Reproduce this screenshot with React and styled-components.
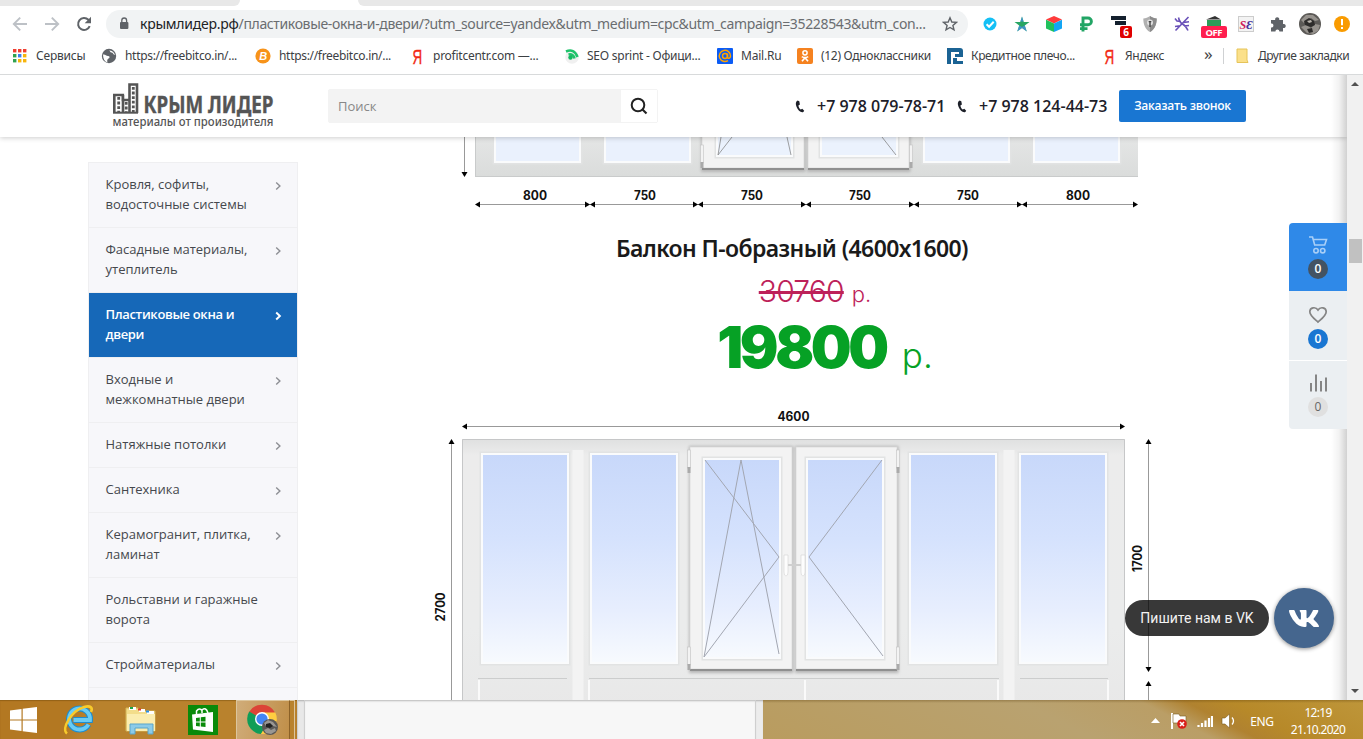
import React from "react";
import styled, { createGlobalStyle, css } from "styled-components";

const UI = `"Noto Sans", "Open Sans", "Liberation Sans", sans-serif`;
const BODY = `"Open Sans", "Noto Sans", sans-serif`;
const DIGITS = `Inter, "Liberation Sans", sans-serif`;

const GlobalStyle = createGlobalStyle`
  * { box-sizing: border-box; }
  body { margin: 0; background: #fff; overflow: hidden; }
`;

const Screen = styled.div`
  width: 1363px;
  height: 739px;
  display: flex;
  flex-direction: column;
  overflow: hidden;
  background: #fff;
  font-family: ${UI};
`;

/* ---------- browser chrome ---------- */

const TabStrip = styled.div`
  flex: 0 0 6px;
  display: flex;
  justify-content: space-between;
  background: #fff;
`;
const TabGap = styled.div`
  width: ${(p) => p.$w}px;
  background: #e8e8e8;
  border-radius: ${(p) => (p.$left ? "0 0 0 7px" : "0 0 7px 0")};
`;

const Toolbar = styled.div`
  flex: 0 0 36px;
  display: flex;
  align-items: center;
  padding-left: 4px;
`;
const NavButton = styled.div`
  width: 32px;
  height: 32px;
  display: grid;
  place-items: center;
`;
const Omnibox = styled.div`
  width: 862px;
  height: 28px;
  margin: 0 6px;
  padding: 0 10px 0 13px;
  border-radius: 14px;
  background: #f1f3f4;
  display: flex;
  align-items: center;
  svg { flex: none; }
`;
const Url = styled.div`
  margin-left: 11px;
  flex: 1;
  font-size: 14px;
  line-height: 20px;
  letter-spacing: -0.355px;
  color: #6a6d70;
  white-space: nowrap;
  b { font-weight: 400; color: #202124; letter-spacing: -0.25px; }
`;
const Extension = styled(NavButton)``;

const BookmarkBar = styled.div`
  flex: 0 0 33px;
  display: flex;
  align-items: center;
  padding: 0 0 5px 12px;
  border-bottom: 1px solid #d8dadb;
`;
const Bookmark = styled.div`
  width: ${(p) => p.$w}px;
  display: flex;
  align-items: center;
  gap: 8px;
  font-size: 12px;
  line-height: 16px;
  color: #3c4043;
  white-space: nowrap;
  letter-spacing: ${(p) => p.$ls || 0}px;
  svg { flex: 0 0 16px; overflow: visible; }
`;
const More = styled.div`
  width: 19px;
  color: #444;
  font-size: 17px;
  line-height: 14px;
  padding-bottom: 3px;
`;
const Divider = styled.div`
  width: 1px;
  height: 16px;
  background: #cfd1d3;
  margin-right: 10px;
`;

/* ---------- page ---------- */

const Browser = styled.div`
  flex: 0 0 625px;
  display: flex;
`;
const Page = styled.div`
  position: relative;
  width: 1347px;
  height: 625px;
  overflow: hidden;
  background: #fff;
`;
const EdgeShade = styled.div`
  position: absolute;
  z-index: 3;
  right: 0;
  top: 0;
  bottom: 0;
  width: 16px;
  background: linear-gradient(to right, rgba(0, 0, 0, 0), rgba(0, 0, 0, 0.05) 50%, rgba(0, 0, 0, 0.18));
`;
const SiteHeader = styled.header`
  position: relative;
  z-index: 2;
  height: 62px;
  padding-left: 112px;
  display: flex;
  align-items: center;
  background: #fff;
  box-shadow: 0 1px 5px rgba(0, 0, 0, 0.2);
  font-family: ${BODY};
`;
const Search = styled.div`
  width: 330px;
  height: 34px;
  margin-left: 54px;
  display: flex;
  border: 1px solid #f3f3f3;
  border-radius: 2px;
  background: #f3f3f3;
`;
const SearchInput = styled.div`
  flex: 1;
  padding-left: 9px;
  font-size: 13px;
  line-height: 32px;
  color: #888;
`;
const SearchButton = styled.div`
  width: 36px;
  background: #fff;
  display: grid;
  place-items: center;
`;
const Phones = styled.div`
  display: flex;
  margin-left: 137px;
`;
const Phone = styled.div`
  width: 162px;
  display: flex;
  align-items: center;
  font-size: 16px;
  font-weight: 600;
  color: #1d2029;
  white-space: nowrap;
  svg { margin-right: 12px; flex: none; }
`;
const CallButton = styled.div`
  width: 127px;
  height: 32px;
  border-radius: 2px;
  background: #1976d2;
  color: #fff;
  font-size: 12px;
  font-weight: 600;
  line-height: 32px;
  letter-spacing: -0.25px;
  text-align: center;
  white-space: nowrap;
`;

const Columns = styled.div`
  display: flex;
  padding-left: 88px;
`;
const Sidebar = styled.nav`
  width: 210px;
  height: 560px;
  margin-top: 25px;
  border: 1px solid #efeff1;
  background: #f7f7fa;
  font-family: ${BODY};
`;
const MenuItem = styled.div`
  display: flex;
  justify-content: space-between;
  padding: 11px 15px 13px 16.5px;
  border-bottom: 1px solid #efeff1;
  font-size: 13px;
  line-height: 20px;
  letter-spacing: ${(p) => (p.$active ? -0.35 : 0)}px;
  color: #45484d;
  white-space: pre-line;
  svg { margin-top: 7px; stroke: #8d8f94; }
  ${(p) => p.$active && css`
    background: #1668b8;
    color: #fff;
    font-weight: 600;
    svg { stroke: #fff; }
  `}
`;

const Products = styled.main`
  width: 930px;
  margin-left: 29px;
  display: flex;
  flex-direction: column;
  align-items: center;
`;
const Diagram = styled.svg`
  flex: none;
  display: block;
  text { font-family: ${DIGITS}; font-weight: 700; font-size: 12.5px; fill: #111; }
`;
const ProductTitle = styled.h3`
  margin: 17px 0 0;
  height: 32px;
  font-family: ${UI};
  font-size: 23px;
  line-height: 32px;
  font-weight: 600;
  letter-spacing: -0.6px;
  color: #1a1a1a;
  white-space: nowrap;
`;
const OldPrice = styled.div`
  height: 48px;
  margin: 3px 0 0 46px;
  display: flex;
  align-items: baseline;
  gap: 8px;
  font-family: ${DIGITS};
  font-size: 30px;
  line-height: 48px;
  font-weight: 300;
  color: #bd2159;
  letter-spacing: -0.8px;
  s { text-decoration-thickness: 3px; }
  small { font-size: 22px; letter-spacing: 0; }
`;
const NewPrice = styled.div`
  height: 72px;
  margin: -4px 0 0 66px;
  display: flex;
  align-items: baseline;
  gap: 16px;
  font-family: ${DIGITS};
  font-size: 57.5px;
  line-height: 72px;
  font-weight: 900;
  letter-spacing: -3.4px;
  color: #06a125;
  small { font-size: 35px; font-weight: 300; letter-spacing: 0; }
`;
const Spacer = styled.div`
  height: ${(p) => p.$h}px;
`;

const QuickPanel = styled.div`
  position: absolute;
  z-index: 3;
  right: 0;
  top: 148px;
  width: 58px;
  border-radius: 4px 0 0 4px;
  overflow: hidden;
  background: #fff;
  display: flex;
  flex-direction: column;
`;
const QuickItem = styled.div`
  height: ${(p) => p.$h}px;
  margin-bottom: ${(p) => p.$gap || 0}px;
  padding-top: ${(p) => p.$pad}px;
  display: flex;
  flex-direction: column;
  align-items: center;
  background: ${(p) => p.$bg};
`;
const Count = styled.div`
  width: 20px;
  height: 20px;
  margin-top: 4px;
  border-radius: 50%;
  background: ${(p) => p.$bg};
  color: ${(p) => p.$fg || "#fff"};
  font: ${(p) => (p.$fg ? 400 : 600)} 12px/20px ${BODY};
  text-align: center;
`;

const VkWidget = styled.div`
  position: absolute;
  z-index: 3;
  right: 13px;
  bottom: 52px;
  display: flex;
  align-items: center;
  gap: 5px;
`;
const VkTip = styled.div`
  width: 144px;
  height: 36px;
  border-radius: 18px;
  background: rgba(0, 0, 0, 0.78);
  color: #f2f2f2;
  font: 400 14px/36px Roboto, sans-serif;
  text-align: center;
  white-space: nowrap;
`;
const VkButton = styled.div`
  width: 60px;
  height: 60px;
  border-radius: 50%;
  background: #45668e;
  box-shadow: 0 1px 4px rgba(0, 0, 0, 0.45);
  display: grid;
  place-items: center;
`;

const Scrollbar = styled.div`
  width: 16px;
  height: 625px;
  background: #f1f1f1;
  display: flex;
  flex-direction: column;
  align-items: center;
`;
const ScrollArrow = styled.div`
  margin-top: ${(p) => (p.$down ? "auto" : "7px")};
  margin-bottom: ${(p) => (p.$down ? "7px" : 0)};
  border: 4px solid transparent;
  ${(p) => (p.$down ? "border-top-color: #505050; border-bottom: 0;" : "border-bottom-color: #505050; border-top: 0;")}
`;
const Thumb = styled.div`
  width: 13px;
  height: 24px;
  margin-top: 153px;
  background: #c1c1c1;
`;

/* ---------- taskbar ---------- */

const Taskbar = styled.div`
  position: relative;
  flex: 0 0 39px;
  display: flex;
  background: #b88026;
`;
const Launchers = styled.div`
  width: 297px;
  display: flex;
  background: linear-gradient(115deg, #b37822 0 70px, #b9822d 90px 100%);
  box-shadow: inset 0 1px 1px rgba(90, 55, 0, 0.35);
`;
const Launcher = styled.div`
  width: ${(p) => p.$w}px;
  display: grid;
  place-items: center;
  ${(p) => p.$active && css`
    height: 39px;
    background: linear-gradient(100deg, #d0ac79, #c08f49);
    border: 1px solid #dcc59d;
    border-right-color: #8b6127;
    border-bottom: 0;
  `}
`;
const Stack = styled.div`
  width: 5px;
  height: 39px;
  border: 1px solid #dcc59d;
  border-left: 0;
  border-bottom: 0;
`;
const Preview = styled.div`
  width: ${(p) => p.$w}px;
  background: ${(p) => p.$bg};
  border-left: 1px solid #cfcfcf;
  box-shadow: inset 0 2px 2px -1px rgba(0, 0, 0, 0.25);
`;
const Tray = styled.div`
  flex: 1;
  display: flex;
  align-items: center;
  justify-content: flex-end;
  padding: 3px 17px 0 0;
  background:
    linear-gradient(to bottom, rgba(80, 50, 0, 0.3), rgba(80, 50, 0, 0) 3px),
    linear-gradient(27deg, #b99c5f 0, #b9a270 150px, #ba9e66 205px, #b08230 225px, #b78929 245px, #be963a 100%);
  color: #fff;
`;
const TrayIcon = styled.div`
  width: ${(p) => p.$w}px;
  display: grid;
  place-items: center;
`;
const TrayLang = styled.div`
  width: 42px;
  font-size: 12px;
  letter-spacing: -0.4px;
  text-align: center;
`;
const Clock = styled.div`
  width: 56px;
  margin-left: 7px;
  font-size: 12px;
  line-height: 17px;
  letter-spacing: -0.7px;
  text-align: center;
  white-space: nowrap;
`;

/* ---------- icons ---------- */

const Svg = ({ s = 16, w, h, children, ...rest }) => (
  <svg width={w || s} height={h || s} viewBox={`0 0 ${w || s} ${h || s}`} fill="none" {...rest}>{children}</svg>
);

const BackIcon = () => <Svg><path d="M15 8H2M8.2 1.6 1.8 8l6.4 6.4" stroke="#bdc1c6" strokeWidth="1.9" /></Svg>;
const ForwardIcon = () => <Svg><path d="M1 8h13M7.8 1.6 14.2 8l-6.4 6.4" stroke="#bdc1c6" strokeWidth="1.9" /></Svg>;
const ReloadIcon = () => (
  <Svg><path d="M13.7 10.2A6 6 0 1 1 12.4 3.8L14 5.6" stroke="#5f6368" strokeWidth="2" /><path d="M15 .8v6.4H8.7z" fill="#5f6368" /></Svg>
);
const LockIcon = () => (
  <Svg w={10} h={14}><rect x="1" y="5" width="8.4" height="7" rx="1" fill="#5f6368" /><path d="M2.8 5V3.4a2.4 2.4 0 0 1 4.8 0V5" stroke="#5f6368" strokeWidth="1.3" /></Svg>
);
const StarIcon = () => (
  <Svg><path d="m8 1.8 1.8 4.2 4.6.4-3.5 3 1.1 4.5L8 11.5 4 13.9l1.1-4.5-3.5-3L6.2 6z" stroke="#5f6368" strokeWidth="1.4" /></Svg>
);

const extensions = [
  <Svg><circle cx="8" cy="8" r="6.5" fill="#14c0f5" /><path d="m4.6 8.2 2.5 2.5 4.6-4.9" stroke="#fff" strokeWidth="2" /></Svg>,
  <Svg><path d="m8 .5 1.800 5.500H15.500l-4.700 3.500 2 6L8 12l-4.800 3.500 2-6L.5 6h5.700z" fill="#28a664" /><path d="M8 .5 6.500 5.500h3zM5.200 9.500l-2 6L8 12l4.800 3.500-2-6L8 11z" fill="#4b8df0" opacity=".7" /></Svg>,
  <Svg><path d="M8 0l8 3.6L8 7.4 0 3.6z" fill="#ff3b3b" /><path d="M0 3.800l8 3.600V16l-8-3.400z" fill="#20c05c" /><path d="M16 3.800 8 7.400V16l8-3.400z" fill="#12a5f4" /></Svg>,
  <Svg><path d="M5 15.500V2h5a3.400 3.400 0 0 1 0 6.800H2M2 12.600h7.500" stroke="#22a565" strokeWidth="2.900" /></Svg>,
  <Svg s={28}><path d="M7 6h15v4H7zM11 11h11v4H11z" fill="#14202e" /><rect x="16" y="16" width="12" height="12" rx="2" fill="#e00000" /><text x="22" y="25.500" fontSize="10" fontWeight="700" fill="#fff" textAnchor="middle" fontFamily="Open Sans">6</text></Svg>,
  <Svg><path d="M8 0c2 1.700 4.300 2.400 6.700 2.400C14.700 8 13 13 8 16 3 13 1.300 8 1.300 2.400 3.700 2.400 6 1.700 8 0z" fill="#b0b0b0" /><path d="M8 0c2 1.700 4.300 2.400 6.700 2.400C14.700 8 13 13 8 16z" fill="#8c8c8c" /><circle cx="8" cy="6.500" r="3" fill="#e0e0e0" /><path d="M6.700 5h2.600v1.200H8.700V11H7.300V6.200h-.6z" fill="#444" /></Svg>,
  <Svg><path d="M14.500 1 1.500 14.500M4.500 1.500q1 5 4 6.500t5.500 6.500M1 2.500l2 2.500 4 .5M1 10.500l5-.7M9.500 6.500l5.500-.8M10 10l5-.5" stroke="#6950b8" strokeWidth="1.600" /></Svg>,
  <Svg w={26} h={28}><path d="m5 9.500 9-3.500 6 3.500z" fill="#333" /><rect x="6" y="10" width="14" height="7" fill="#2c9c58" /><rect x="0" y="16" width="26" height="12" rx="2" fill="#ff1f4f" /><text x="13" y="25.500" fontSize="9.500" fontWeight="700" fill="#fff" textAnchor="middle" fontFamily="Open Sans" textLength="17">OFF</text></Svg>,
  <Svg><rect x=".5" y=".5" width="15" height="15" fill="#f3f3f3" stroke="#ccc" /><text x="1.500" y="12.500" fontSize="12.500" fontWeight="700" fontStyle="italic" fill="#d0205a" fontFamily="Liberation Serif" textLength="13" lengthAdjust="spacingAndGlyphs">S<tspan fill="#47309a">Ɛ</tspan></text></Svg>,
  <Svg><path d="M1 4h4.200a2.100 2.100 0 1 1 4 0H13v4a2.100 2.100 0 1 1 0 4v3.500H9.400a2 2 0 1 0-4 0H1v-4a2 2 0 1 0 0-3.900z" fill="#5f6368" /></Svg>,
  <Svg s={22}><circle cx="11" cy="11" r="11" fill="#5c5a57" /><path d="M2 7 7 2l7 0 6 5-4 1-4-3-4 2-3 3zM2 14l5-2 5 3 4-4 5 1-2 6-5 3-6-1z" fill="#96928d" /><path d="m5 8 5-3 5 3 1 4-4 2-6-2zM8 16l5-1 1 4-4 1z" fill="#2d2c2b" /><path d="m8 8 4-1 1 2-3 1z" fill="#b9b4ad" /></Svg>,
  <Svg><circle cx="8" cy="8" r="8" fill="#f99b00" /><path d="M7 3h2v6.300H7zM7 11h2v2H7z" fill="#fff" /></Svg>,
];

const YandexMark = () => <Svg><text x="3.500" y="15.500" fontSize="21" fill="#f22a14" stroke="#f22a14" strokeWidth=".4" fontFamily="Liberation Sans" textLength="9.500" lengthAdjust="spacingAndGlyphs">Я</text></Svg>;

const bookmarks = [
  { t: "Сервисы", w: 89, i: <Svg>{["#f03e30", "#f03e30", "#f03e30", "#2fa24f", "#3b7ff0", "#f7b50c", "#2fa24f", "#f7b50c", "#f7b50c"].map((c, n) => <rect key={n} x={1 + (n % 3) * 5} y={1 + Math.floor(n / 3) * 5} width="3.400" height="3.400" fill={c} />)}</Svg> },
  { t: "https://freebitco.in/...", w: 154, ls: -0.31, i: <Svg><circle cx="8" cy="8" r="7.200" fill="#5f6368" /><path d="M2 6.500c2.500-.5 3 1.500 5 1.500s2 2 .5 2.500S6 13 6.500 14.500C3.500 13.500 2 10.500 2 6.500zM8 2.500c1 0 1 2 2.500 2s1.500 2 3.500 2.500c-.5-2.500-3-5-6-4.500z" fill="#fff" /></Svg> },
  { t: "https://freebitco.in/...", w: 154, ls: -0.31, i: <Svg><circle cx="8" cy="8" r="7.600" fill="#f7931a" /><text x="4.300" y="12" fontSize="11" fontWeight="700" fontStyle="italic" fill="#fff" fontFamily="Liberation Sans">B</text></Svg> },
  { t: "profitcentr.com —...", w: 154, ls: -0.25, i: <YandexMark /> },
  { t: "SEO sprint - Офици...", w: 154, ls: -0.25, i: <Svg><circle cx="9" cy="9" r="6.800" fill="#f0f0f0" /><path d="M3 3.500Q11 0 14.500 9M5.500 6.500q5-1 6 4" stroke="#1fc36b" strokeWidth="2.600" /><circle cx="7.500" cy="9.500" r="2.200" fill="#15b860" /></Svg> },
  { t: "Mail.Ru", w: 80, i: <Svg><rect width="16" height="16" rx="1" fill="#0b5cf5" /><circle cx="8" cy="8" r="2.500" stroke="#ffa300" strokeWidth="1.500" /><path d="M10.500 5.500V9c0 2 3 1.500 3-1A5.600 5.600 0 1 0 11 12.600" stroke="#ffa300" strokeWidth="1.500" /></Svg> },
  { t: "(12) Одноклассники", w: 150, ls: -0.3, i: <Svg><rect width="16" height="16" rx="2" fill="#f58220" /><circle cx="8" cy="4.800" r="2.100" stroke="#fff" strokeWidth="1.500" /><path d="M4.800 8.600q3.200 2 6.400 0M8 9.800l-3 3.400M8 9.800l3 3.400" stroke="#fff" strokeWidth="1.700" /></Svg> },
  { t: "Кредитное плечо...", w: 154, ls: -0.37, i: <Svg><path d="M0 0h13q3 0 3 3v6H8V6h4V4H4v12H0z" fill="#1b6394" /><path d="M6 10h4v3h6v3H6z" fill="#1b6394" /></Svg> },
  { t: "Яндекс", w: 103, ls: -0.3, i: <YandexMark /> },
];

const PhoneIcon = () => <Svg w={10} h={13}><path d="M2.600.500C.6 1.500.3 4 1.600 7c1.200 2.800 3.400 5.200 5.600 5.300 1 0 1.800-.7 2-1.500L7.300 8.700l-1.500.9C4.700 8.900 3.600 7 3.400 5.400l1.500-.9L4.300 1.300z" fill="#1d2029" /></Svg>;
const Chevron = ({ bold }) => <Svg w={7} h={10}><path d="m1.200 1.500 3.700 3.500-3.700 3.500" strokeWidth={bold ? 1.9 : 1.4} /></Svg>;
const VkMark = () => (
  <svg width="30" height="17" viewBox="18 96 540 320" preserveAspectRatio="none">
    <path fill="#fff" d="M545 117.700c3.700-12.500 0-21.700-17.800-21.700h-58.900c-15 0-21.900 7.900-25.600 16.700 0 0-30 73.100-72.400 120.500-13.700 13.700-20 18.100-27.500 18.100-3.700 0-9.400-4.400-9.400-16.900V117.700c0-15-4.200-21.700-16.600-21.700h-92.600c-9.400 0-15 7-15 13.500 0 14.200 21.200 17.500 23.400 57.500v86.800c0 19-3.400 22.500-10.900 22.500-20 0-68.600-73.400-97.400-157.400-5.800-16.300-11.500-22.900-26.600-22.900H38.800c-16.800 0-20.200 7.900-20.200 16.700 0 15.600 20 93.100 93.100 195.500C160.400 378.100 229 416 291.400 416c37.500 0 42.100-8.400 42.100-22.900 0-66.800-3.400-73.100 15.400-73.100 8.700 0 23.700 4.400 58.700 38.100 40 40 46.600 57.900 69 57.900h58.900c16.800 0 25.300-8.400 20.400-25-11.200-34.900-86.900-106.700-90.300-111.500-8.700-11.200-6.200-16.200 0-26.200.1-.1 72-101.300 79.400-135.600z" />
  </svg>
);

const Logo = () => (
  <svg width="162" height="50" viewBox="112 81 162 50">
    <path d="M114.300 113V95h8.500v5h5.500M129.500 113V84.500h7.500V113M123 95v18" fill="none" stroke="#555" strokeWidth="2.600" />
    <path d="M118.700 97v15M126.200 102v10M133.300 87v25" stroke="#555" strokeWidth="2.800" strokeDasharray="2.800 1.800" />
    <path d="M113 112.700h25" stroke="#555" strokeWidth="2" />
    <text x="143.500" y="113" fontFamily="Noto Sans" fontWeight="700" fontSize="24" fill="#555" stroke="#555" strokeWidth=".4" textLength="130" lengthAdjust="spacingAndGlyphs">КРЫМ ЛИДЕР</text>
    <text x="112.500" y="126.300" fontFamily="Noto Sans" fontWeight="500" fontSize="12" fill="#555" textLength="161" lengthAdjust="spacingAndGlyphs">материалы от произодителя</text>
  </svg>
);

/* ---------- window drawings ---------- */

const Head = ({ x, y, dir }) => {
  const turn = { left: 0, up: 90, right: 180, down: 270 }[dir];
  return <path d="M0 0 5-3V3z" fill="#000" transform={`translate(${x} ${y}) rotate(${turn})`} />;
};
const Glass = ({ x, y, w, h, fill }) => (
  <g>
    <rect x={x - 3.5} y={y - 3.5} width={w + 7} height={h + 7} fill="#e2e3e3" />
    <rect x={x - 2} y={y - 2} width={w + 4} height={h + 4} fill="#fafbfc" />
    <rect x={x} y={y} width={w} height={h} fill={fill} />
  </g>
);
const Sash = ({ x, y, w, h }) => (
  <g>
    <rect x={x - 1} y={y - 1} width={w + 2.5} height={h + 5} fill="#b5b5b5" filter="url(#soft)" />
    <rect x={x} y={y} width={w} height={h} fill="#f3f3f3" stroke="#dadada" strokeWidth=".8" />
    <path d={`M${x} ${y + h + 1}H${x + w}`} stroke="#8f8f8f" strokeWidth="2" />
  </g>
);
const Hinge = ({ x, y }) => (
  <g><rect x={x - 1.5} y={y} width="3" height="18" fill="#f3f3f3" stroke="#c4c4c4" strokeWidth=".6" /><rect x={x - 1.5} y={y + 17} width="3" height="6" fill="#aaa" /></g>
);

const TopDiagram = () => {
  const joints = [590, 698, 806, 914, 1022];
  return (
    <Diagram width="930" height="78" viewBox="327 137 930 78">
      <defs>
        <filter id="soft"><feGaussianBlur stdDeviation="1.5" /></filter>
        <linearGradient id="frameA" x2="0" y2="1"><stop stopColor="#e6e7e7" /><stop offset="1" stopColor="#dadcdb" /></linearGradient>
      </defs>
      <rect x="475" y="130" width="663" height="47" fill="url(#frameA)" />
      <path d="M475.500 130v47M475 176.500h663" stroke="#c9cbcb" />
      {[496, 606, 925, 1035].map((x) => <Glass key={x} x={x} y={120} w={83} h={41} fill="#eaf1fd" />)}
      <Sash x={702} y={110} w={102} h={58} />
      <Sash x={808} y={110} w={101} h={58} />
      <Glass x={718} y={110} w={73} h={45} fill="#ebf2fd" />
      <Glass x={822} y={110} w={74} h={45} fill="#ebf2fd" />
      <Hinge x={702} y={145} /><Hinge x={911} y={145} />
      <path d="M718 155 732 137M718 155l3-18M791 155l-4-18M896 155 882 137" stroke="#888" strokeWidth=".8" />
      <path d="M464.500 130v45M476 204.500h661" stroke="#999" />
      <Head x={464.5} y={177} dir="down" />
      <Head x={475} y={204.5} dir="left" />
      <Head x={1138} y={204.5} dir="right" />
      {joints.map((x) => <g key={x}><Head x={x} y={204.5} dir="right" /><Head x={x} y={204.5} dir="left" /></g>)}
      {[[535, 800], [645, 750], [752, 750], [860, 750], [968, 750], [1078, 800]].map(([x, t]) => (
        <text key={x} x={x} y="200" textAnchor="middle" textLength={t === 800 ? 24 : 22} lengthAdjust="spacingAndGlyphs">{t}</text>
      ))}
    </Diagram>
  );
};

const MainDiagram = () => (
  <Diagram width="930" height="295" viewBox="327 405 930 295">
    <defs>
      <linearGradient id="sky" x2="0" y2="1"><stop stopColor="#c8d8fa" /><stop offset=".4" stopColor="#d5e2fd" /><stop offset=".75" stopColor="#e7eefe" /><stop offset="1" stopColor="#f7fafe" /></linearGradient>
      <linearGradient id="frameB" x2="0" y2="1"><stop stopColor="#dfe0e0" /><stop offset=".06" stopColor="#ececec" /><stop offset=".7" stopColor="#ebecec" /><stop offset="1" stopColor="#e8e8e8" /></linearGradient>
    </defs>
    <rect x="462" y="439" width="663" height="270" fill="url(#frameB)" />
    <path d="M462.500 700V439.500h662V700" stroke="#c6c7c8" fill="none" />
    <path d="M578 450v254M1009 450v254" stroke="#f3f3f3" strokeWidth="11" />
    <path d="M478 678.500h89M589 678.500h410M1020 678.500h88" stroke="#cccdcd" />
    <path d="M479 680v20M589 680v20M805 680v20M998 680v20M1108 680v20" stroke="#fafafa" strokeWidth="2" />
    {[483, 592, 911, 1021].map((x) => <Glass key={x} x={x} y={455} w={84} h={207} fill="url(#sky)" />)}
    <Sash x={690} y={447} w={102} h={222} />
    <Sash x={796} y={447} w={101} h={222} />
    <Glass x={705} y={460} w={74} h={197} fill="url(#sky)" />
    <Glass x={808} y={460} w={74} h={197} fill="url(#sky)" />
    <Hinge x={689} y={450} /><Hinge x={689} y={647} /><Hinge x={898} y={450} /><Hinge x={898} y={647} />
    <path d="M705 460 779 557 704 657 741 460 779 654M882 460 809 557 883 656" stroke="#a2a6b1" strokeWidth="1" fill="none" />
    <path d="M787 565h17" stroke="#cfcfcf" strokeWidth="2" />
    <path d="M784 555h4v17q0 4-2 4t-2-4zM801 555h4v17q0 4-2 4t-2-4z" fill="#fdfdfd" stroke="#d4d4d4" strokeWidth=".6" />
    <path d="M464 426.500h659M451.500 441v265M1148.500 441v228M1148.500 684v20" stroke="#999" />
    <Head x={462} y={426.5} dir="left" /><Head x={1125} y={426.5} dir="right" />
    <Head x={451.5} y={439} dir="up" />
    <Head x={1148.5} y={439} dir="up" /><Head x={1148.5} y={672} dir="down" /><Head x={1148.5} y={681} dir="up" />
    <text x="793.500" y="421" textAnchor="middle" textLength="32" lengthAdjust="spacingAndGlyphs">4600</text>
    <text transform="translate(445 607) rotate(-90)" textAnchor="middle" textLength="29" lengthAdjust="spacingAndGlyphs">2700</text>
    <text transform="translate(1142 558.500) rotate(-90)" textAnchor="middle" textLength="27" lengthAdjust="spacingAndGlyphs">1700</text>
  </Diagram>
);

const menu = [
  { t: "Кровля, софиты,\nводосточные системы" },
  { t: "Фасадные материалы,\nутеплитель" },
  { t: "Пластиковые окна и\nдвери", active: true },
  { t: "Входные и\nмежкомнатные двери" },
  { t: "Натяжные потолки" },
  { t: "Сантехника" },
  { t: "Керамогранит, плитка,\nламинат" },
  { t: "Рольставни и гаражные\nворота", plain: true },
  { t: "Стройматериалы" },
];

/* ---------- taskbar icons ---------- */

const WindowsIcon = () => <Svg w={27} h={26}><path d="M0 3.600 11.500 2v10.500H0zM12.700 1.800 27 0v12.500H12.700zM0 13.600h11.500v10.500L0 22.500zM12.700 13.600H27V26l-14.300-1.800z" fill="#fff" /></Svg>;
const IeIcon = () => (
  <Svg s={32}>
    <path d="M25.500 20.500A10.500 10.500 0 1 1 27 16H10.500" stroke="#1d8dd0" strokeWidth="6" />
    <path d="M25.500 20.500A10.500 10.500 0 1 1 27 16H10.500" stroke="#6accf3" strokeWidth="3.800" />
    <path d="M4 29.500C-2 25 8 7 21 3c7-2 9 1 7 5" stroke="#f8cb2c" strokeWidth="2.600" />
  </Svg>
);
const ExplorerIcon = () => (
  <Svg s={32}><path d="M1 4h12l2 3h15v20H1z" fill="#f3dd8b" stroke="#d3b458" /><path d="M4 3h7v3H4zM14 5h6v3h-6zM22 7h7v3h-7z" fill="#fff" /><path d="M5 3h3v2H5z" fill="#1ba84a" /><path d="M13 4.500h3v2h-3z" fill="#e0392b" /><path d="M21 6.500h3v2h-3z" fill="#2a8fe6" /><path d="M2 10h28v17H2z" fill="#fbedb0" /><path d="M5 30V20h23v10h-5v-6H10v6z" fill="#8ccbe8" stroke="#5aa5c9" /></Svg>
);
const StoreIcon = () => (
  <Svg s={30}><rect width="30" height="30" fill="#0a8a0a" /><path d="M4 9.500 25 7v20L5 24.500z" fill="#fff" /><path d="M8.500 10V6q3-4 6 0M14 8V5q4-3.500 6 3" stroke="#fff" strokeWidth="1.500" /><path d="m8 13 3.800-.5v4H8zM12.800 12.300l4.700-.6v4.800h-4.700zM8 17.500h3.800v4L8 21zM12.800 17.500h4.700V22l-4.700-.4z" fill="#0a8a0a" /></Svg>
);
const ChromeIcon = () => (
  <Svg s={32}>
    <path d="M15 15 2 8A15 15 0 0 1 28 8.500z" fill="#dc4437" /><path d="M15 15 2.200 7.500A15 15 0 0 0 14 30l5-9z" fill="#109d58" /><path d="M15 8.500h13.300A15 15 0 0 1 14 30l7-11z" fill="#ffcd41" />
    <circle cx="15" cy="15" r="7" fill="#fff" /><circle cx="15" cy="15" r="5.600" fill="#4386f5" />
    <circle cx="23" cy="23" r="8" fill="#5a5856" /><path d="m17 19 4-3 5 2 4 5-4-1-3-2-4 2zM17 26l4-2 3 2 4-2 1 3-5 3-5-1z" fill="#9a9793" /><path d="m19 20 4-1 3 3-3 2-4-1z" fill="#222" />
  </Svg>
);

export default function App() {
  return (
    <Screen>
      <GlobalStyle />
      <TabStrip><TabGap $w={240} /><TabGap $w={1005} $left /></TabStrip>
      <Toolbar>
        <NavButton><BackIcon /></NavButton>
        <NavButton><ForwardIcon /></NavButton>
        <NavButton><ReloadIcon /></NavButton>
        <Omnibox>
          <LockIcon />
          <Url><b>крымлидер.рф</b>/пластиковые-окна-и-двери/?utm_source=yandex&amp;utm_medium=cpc&amp;utm_campaign=35228543&amp;utm_con...</Url>
          <StarIcon />
        </Omnibox>
        {extensions.map((icon, n) => <Extension key={n}>{icon}</Extension>)}
      </Toolbar>
      <BookmarkBar>
        {bookmarks.map((b, n) => <Bookmark key={n} $w={b.w} $ls={b.ls ?? -0.2}>{b.i}<span>{b.t}</span></Bookmark>)}
        <More>»</More>
        <Divider />
        <Bookmark $w={120} $ls={-0.45}><Svg><path d="M3 1h10v11l1 2.500H3z" fill="#fbe08a" stroke="#e6c459" /></Svg><span>Другие закладки</span></Bookmark>
      </BookmarkBar>

      <Browser>
        <Page>
          <SiteHeader>
            <Logo />
            <Search>
              <SearchInput>Поиск</SearchInput>
              <SearchButton><Svg s={18}><circle cx="8" cy="8" r="6.300" stroke="#222" strokeWidth="2" /><path d="m12.500 12.500 4 4" stroke="#222" strokeWidth="2.200" /></Svg></SearchButton>
            </Search>
            <Phones>
              <Phone><PhoneIcon />+7 978 079-78-71</Phone>
              <Phone><PhoneIcon />+7 978 124-44-73</Phone>
            </Phones>
            <CallButton>Заказать звонок</CallButton>
          </SiteHeader>
          <Columns>
            <Sidebar>
              {menu.map((m) => (
                <MenuItem key={m.t} $active={m.active}><span>{m.t}</span>{!m.plain && <Chevron bold={m.active} />}</MenuItem>
              ))}
            </Sidebar>
            <Products>
              <TopDiagram />
              <ProductTitle>Балкон П-образный (4600х1600)</ProductTitle>
              <OldPrice><s>30760</s><small>р.</small></OldPrice>
              <NewPrice><span>19800</span><small>р.</small></NewPrice>
              <Spacer $h={22} />
              <MainDiagram />
            </Products>
          </Columns>
          <EdgeShade />
          <QuickPanel>
            <QuickItem $h={68} $pad={12} $bg="#2f89e8">
              <Svg s={20}><path d="M1 2h3.500l2.200 8h10l1.800-5.500H5.300" stroke="#a9cff7" strokeWidth="1.600" /><circle cx="8" cy="15.700" r="2.200" stroke="#a9cff7" strokeWidth="1.600" /><circle cx="14.700" cy="15.700" r="2.200" stroke="#a9cff7" strokeWidth="1.600" /></Svg>
              <Count $bg="#435363">0</Count>
            </QuickItem>
            <QuickItem $h={69} $gap={1} $pad={14} $bg="#ebeff2">
              <Svg s={20}><path d="M10 17C6 13.500 1.800 10.500 1.800 6.700 1.800 2.200 7.800 1.500 10 5c2.200-3.500 8.200-2.800 8.200 1.700C18.200 10.500 14 13.500 10 17z" stroke="#858585" strokeWidth="1.700" /></Svg>
              <Count $bg="#1976d2">0</Count>
            </QuickItem>
            <QuickItem $h={68} $pad={12} $bg="#ebeff2">
              <Svg s={20}><path d="M3 10v8.500M8 1.500v17M13 8v10.500M18 4.500v14" stroke="#858585" strokeWidth="2" /></Svg>
              <Count $bg="#e0e0e0" $fg="#666">0</Count>
            </QuickItem>
          </QuickPanel>
          <VkWidget>
            <VkTip>Пишите нам в VK</VkTip>
            <VkButton><VkMark /></VkButton>
          </VkWidget>
        </Page>
        <Scrollbar><ScrollArrow /><Thumb /><ScrollArrow $down /></Scrollbar>
      </Browser>

      <Taskbar>
        <Launchers>
          <Launcher $w={46}><WindowsIcon /></Launcher>
          <Launcher $w={66}><IeIcon /></Launcher>
          <Launcher $w={58}><ExplorerIcon /></Launcher>
          <Launcher $w={66}><StoreIcon /></Launcher>
          <Launcher $w={54} $active><ChromeIcon /></Launcher>
          <Stack />
        </Launchers>
        <Preview $w={7} $bg="#e8e8e8" />
        <Preview $w={451} $bg="#f7f7f7" />
        <Preview $w={8} $bg="#ececec" />
        <Tray>
          <TrayIcon $w={20}><Svg w={9} h={6}><path d="m0 5 4.500-5L9 5z" fill="#fff" /></Svg></TrayIcon>
          <TrayIcon $w={28}><Svg s={18}><path d="M2 1v16" stroke="#fff" strokeWidth="2" /><path d="M3 2h6l1 2h6v7H3z" fill="#fff" stroke="#7a5a20" strokeWidth=".6" /><circle cx="12" cy="12" r="4.800" fill="#d9201a" /><path d="m10 10 4 4m0-4-4 4" stroke="#fff" strokeWidth="1.600" /></Svg></TrayIcon>
          <TrayIcon $w={24}><Svg><path d="M1.500 14v-2M5 14v-4M8.500 14V7.500M12 14V5M15 14V3" stroke="#fff" strokeWidth="2.200" /></Svg></TrayIcon>
          <TrayIcon $w={24}><Svg><path d="M1 5h3l4.500-4v14L4 11H1z" fill="#fff" stroke="#7a5a20" strokeWidth=".6" /><path d="M11 4.500q3 3.500 0 7" stroke="#fff" strokeWidth="1.300" /></Svg></TrayIcon>
          <TrayLang>ENG</TrayLang>
          <Clock>12:19<br />21.10.2020</Clock>
        </Tray>
      </Taskbar>
    </Screen>
  );
}
